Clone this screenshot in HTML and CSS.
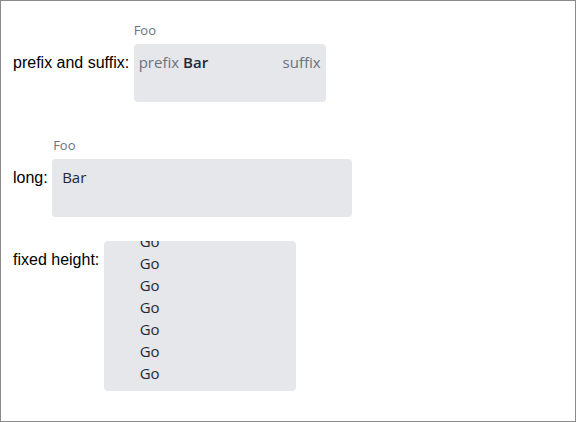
FILE: index.html
```html
<!DOCTYPE html>
<html>
<head>
<meta charset="utf-8">
<link rel="stylesheet" href="styles.css">
</head>
<body>
  <div class="page">
    <div class="row row-first">
      <div class="field-label">Foo</div>
      <span class="label">prefix and suffix:</span>
      <div class="box box-short">
        <span class="affix">prefix</span>
        <span class="value value-strong">Bar</span>
        <span class="spacer"></span>
        <span class="affix">suffix</span>
      </div>
    </div>
    <div class="row">
      <div class="field-label field-label-shift">Foo</div>
      <span class="label">long:</span>
      <div class="box box-long">
        <span class="value value-plain">Bar</span>
      </div>
    </div>
    <div class="row row-fixed">
      <span class="label label-top">fixed height:</span>
      <div class="box box-fixed">
        <ul class="list">
          <li>Go</li>
          <li>Go</li>
          <li>Go</li>
          <li>Go</li>
          <li>Go</li>
          <li>Go</li>
          <li>Go</li>
        </ul>
      </div>
    </div>
  </div>
</body>
</html>
```

FILE: styles.css
```css
html, body {
  margin: 0;
  padding: 0;
  background: #ffffff;
}

.page {
  box-sizing: border-box;
  width: 576px;
  height: 422px;
  border: 1px solid #8a8a8a;
  padding: 21px 11px 0 12px;
  display: flex;
  flex-direction: column;
  gap: 24px;
  font-family: "Liberation Sans", Arial, sans-serif;
  font-size: 16px;
  color: #000000;
}

.row {
  display: grid;
  grid-template-columns: auto auto;
  justify-content: start;
  column-gap: 4.45px;
  align-items: baseline;
}

.row-first {
  margin-bottom: 11px;
}

.field-label {
  grid-column: 2;
  grid-row: 1;
  font-family: "Open Sans", "Noto Sans", sans-serif;
  font-size: 13px;
  line-height: 16px;
  color: #6b7280;
  margin-bottom: 6px;
  padding-left: 0;
}

.field-label-shift {
  padding-left: 1px;
}

.label {
  grid-column: 1;
  grid-row: 2;
  line-height: 18px;
}

.row-fixed .label {
  grid-row: 1;
}

.row-fixed .box {
  grid-row: 1;
}

.label-top {
  align-self: start;
  margin-top: 10px;
}

.box {
  grid-column: 2;
  grid-row: 2;
  box-sizing: border-box;
  background: #e5e7eb;
  border-radius: 4px;
  font-family: "Open Sans", "Noto Sans", sans-serif;
  font-size: 15px;
  line-height: 20px;
}

.box-short {
  width: 192px;
  height: 58px;
  padding: 8px 5px 0 5px;
  display: flex;
  align-items: baseline;
  gap: 4px;
}

.box-long {
  width: 300px;
  height: 58px;
  padding: 8px 10px 0 10px;
}

.spacer {
  flex: 1;
}

.affix {
  color: #6b7280;
}

.value {
  color: #1f2937;
}

.value-strong {
  font-weight: 600;
}

.value-plain {
  font-weight: 500;
}

.box-fixed {
  width: 192px;
  height: 150px;
  overflow: hidden;
  align-self: start;
}

.list {
  list-style: none;
  margin: -11px 0 0 0;
  padding: 0 0 0 36px;
  line-height: 22px;
  color: #1f2937;
  font-weight: 500;
}
```
